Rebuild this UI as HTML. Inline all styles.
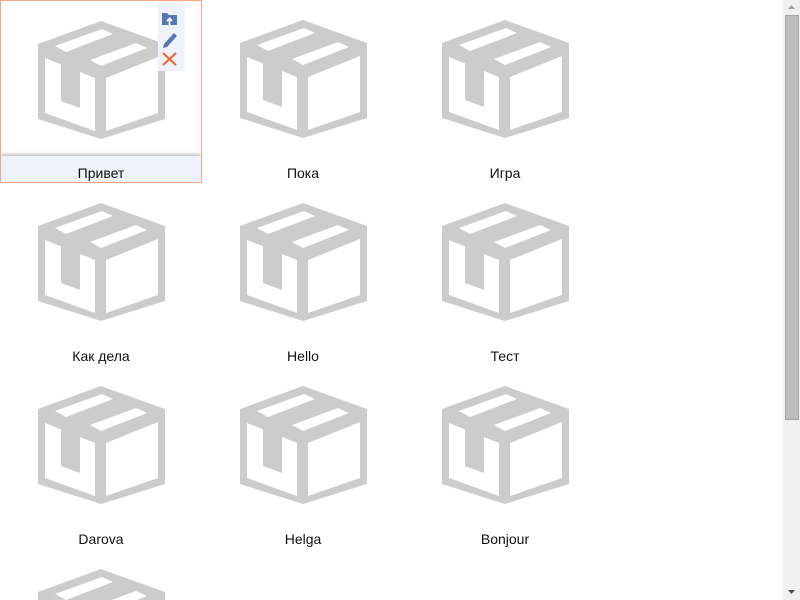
<!DOCTYPE html>
<html style="overflow:hidden;width:800px;height:600px"><head><meta charset="utf-8"><style>
body{margin:0;width:800px;height:600px;overflow:hidden;background:#fff;font-family:"Liberation Sans","DejaVu Sans",sans-serif;position:relative}
.t{position:absolute;width:202px;height:183px;overflow:hidden}
.t svg{position:absolute;left:0;top:0}
.l{position:absolute;left:0;right:0;top:165px;text-align:center;font-size:14px;color:#111}
.sel{box-sizing:border-box;border:1px solid #f7a57c}
.sel .band{position:absolute;left:0;right:0;top:155px;bottom:0;background:#eef3fb;box-shadow:0 -2px 3px rgba(0,0,0,.25)}
.sel .l{top:164px}
.tb{position:absolute;left:157px;top:3px;width:27px;height:67px;background:#eef3fb}
.sb{position:absolute;left:783px;top:0;width:17px;height:600px;background:#f0f0f0}
.th{position:absolute;left:785px;top:15px;width:12px;height:403px;background:#bcbcbc;border:1px solid #a8a8a8}
</style></head><body>
<svg width="0" height="0" style="position:absolute"><defs>
<g id="box">
<polygon points="101,20 38,43 38,118 101,138 165,118 165,43" fill="#cccccc"/>
<polygon points="45,57 95,77 95,130 45,112" fill="#fff"/>
<polygon points="106,77 158,56 158,112 106,130" fill="#fff"/>
<polygon points="55,45 102,28 113,33 66,51" fill="#fff"/>
<polygon points="90,59 136,42 147,47 101,65" fill="#fff"/>
<polygon points="61,55 80,62 80,107 61,100" fill="#cccccc"/>
</g></defs></svg>

<div class="t sel" style="left:0;top:0"><div class="band"></div><svg width="202" height="183"><use href="#box" x="-1" y="0"/></svg><div class="l">Привет</div>
<div class="tb">
<svg width="27" height="67" viewBox="0 0 27 67">
<path d="M4 9h5l2 2h8v10H4z" fill="#5676b4"/><path d="M11.5 21v-6M9 17l2.5-2.5L14 17" stroke="#fff" stroke-width="1.8" fill="none"/>
<path d="M6 40l10-11 3 3-10 11-4 1z" fill="#5676b4"/>
<path d="M5 49l13 12M18 49L5 61" stroke="#f5602c" stroke-width="2" fill="none"/>
</svg></div></div>
<div class="t" style="left:202px;top:0"><svg width="202" height="183"><use href="#box"/></svg><div class="l">Пока</div></div>
<div class="t" style="left:404px;top:0"><svg width="202" height="183"><use href="#box"/></svg><div class="l">Игра</div></div>
<div class="t" style="left:0;top:183px"><svg width="202" height="183"><use href="#box"/></svg><div class="l">Как дела</div></div>
<div class="t" style="left:202px;top:183px"><svg width="202" height="183"><use href="#box"/></svg><div class="l">Hello</div></div>
<div class="t" style="left:404px;top:183px"><svg width="202" height="183"><use href="#box"/></svg><div class="l">Тест</div></div>
<div class="t" style="left:0;top:366px"><svg width="202" height="183"><use href="#box"/></svg><div class="l">Darova</div></div>
<div class="t" style="left:202px;top:366px"><svg width="202" height="183"><use href="#box"/></svg><div class="l">Helga</div></div>
<div class="t" style="left:404px;top:366px"><svg width="202" height="183"><use href="#box"/></svg><div class="l">Bonjour</div></div>
<div class="t" style="left:0;top:549px;height:51px"><svg width="202" height="183"><use href="#box"/></svg></div>
<div class="sb"></div><div class="th"></div>
<svg style="position:absolute;left:783px;top:0" width="17" height="600"><path d="M5 9h7l-3.5-4z" fill="#a0a0a0"/><path d="M5 590h7l-3.5 4z" fill="#505050"/></svg>
</body></html>
